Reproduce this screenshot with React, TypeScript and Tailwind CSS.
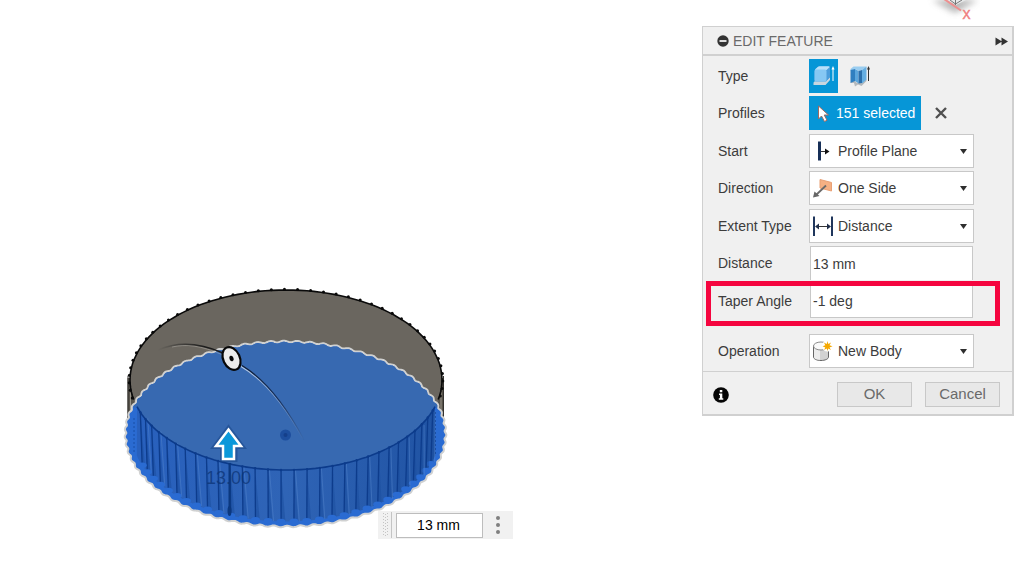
import type { ReactNode } from "react";

const TEETH = 75;
const STEP = (Math.PI * 2) / TEETH;
const PHASE = Math.PI / 2 + 0.032;

type Ring = { cx: number; cy: number; rx: number; ry: number };
const RIM: Ring = { cx: 286, cy: 380, rx: 156, ry: 90 };
const BASE: Ring = { cx: 285.5, cy: 434, rx: 159, ry: 91.5 };
const FOOT: Ring = { cx: 286, cy: 434, rx: 154, ry: 87.5 };

const at = (r: Ring, a: number) => ({
  x: r.cx + r.rx * Math.cos(a),
  y: r.cy + r.ry * Math.sin(a),
});

function arc(r: Ring, from: number, to: number) {
  const parts: string[] = [];
  for (let i = 0; i <= 80; i++) {
    const p = at(r, from + ((to - from) * i) / 80);
    parts.push(`${p.x.toFixed(1)},${p.y.toFixed(1)}`);
  }
  return parts.join("L");
}

function wavy(r: Ring, amp: number) {
  const parts: string[] = [];
  for (let i = 0; i < 900; i++) {
    const a = (i / 900) * Math.PI * 2;
    const d = amp * Math.cos((a - PHASE) * TEETH);
    const p = at({ ...r, rx: r.rx + d, ry: r.ry + d }, a);
    parts.push(`${p.x.toFixed(1)},${p.y.toFixed(1)}`);
  }
  return `M${parts.join("L")}Z`;
}

const angles = Array.from({ length: TEETH }, (_, i) => PHASE + (i - 37) * STEP);
const backAngles = angles.filter((a) => Math.sin(a) < 0.2);
const frontAngles = angles.filter((a) => Math.sin(a) > 0.3);
const basePath = wavy(BASE, 0.8);
const backRim = `M${arc(RIM, Math.PI - 0.22, Math.PI * 2 + 0.22)}`;
const frontRim = `M${arc(RIM, 0.3, Math.PI - 0.3)}`;
const wallPath = `${frontRim}L${arc(FOOT, Math.PI - 0.25, 0.25)}Z`;

function Model() {
  return (
    <svg
      className="absolute left-[120px] top-[280px]"
      width="332"
      height="254"
      viewBox="120 280 332 254"
      role="img"
      aria-label="Bottle cap extrusion"
    >
      <defs>
        <linearGradient id="fade" x1="158" y1="0" x2="205" y2="0" gradientUnits="userSpaceOnUse">
          <stop offset="0" stopColor="#1c1c1c" stopOpacity="0" />
          <stop offset="1" stopColor="#1c1c1c" />
        </linearGradient>
        <linearGradient id="fadeDown" x1="240" y1="365" x2="304" y2="442" gradientUnits="userSpaceOnUse">
          <stop offset="0" stopColor="#101c30" />
          <stop offset="0.5" stopColor="#17305c" />
          <stop offset="1" stopColor="#17305c" stopOpacity="0" />
        </linearGradient>
        <linearGradient id="fadeLight" x1="240" y1="365" x2="304" y2="442" gradientUnits="userSpaceOnUse">
          <stop offset="0" stopColor="#bccde6" />
          <stop offset="1" stopColor="#bccde6" stopOpacity="0" />
        </linearGradient>
        <linearGradient id="wall" x1="137" y1="0" x2="436" y2="0" gradientUnits="userSpaceOnUse">
          <stop offset="0" stopColor="#2860bd" />
          <stop offset="0.5" stopColor="#2f64b6" />
          <stop offset="1" stopColor="#2053a3" />
        </linearGradient>
        <clipPath id="baseClip">
          <path d={basePath} />
        </clipPath>
      </defs>

      <path d="M127.5 378V420H444V378Z" fill="#57534b" />
      <path d="M128 376V418M443.5 376V418" stroke="#33312e" strokeWidth="1" />
      <path d="M130.5 392V414M441 392V414" stroke="#9a958a" strokeWidth="1" />
      <path d={`${backRim}V434H133Z`} fill="#6a665f" />
      <path d={backRim} fill="none" stroke="#0a0a0a" strokeWidth="1.6" />
      {backAngles.map((a) => {
        const p = at({ ...RIM, rx: 156.8, ry: 90.7 }, a);
        return <circle key={a} cx={p.x} cy={p.y} r="1.5" fill="#0a0a0a" />;
      })}

      <path d={basePath} fill="#2a6bd2" stroke="#d0d1d1" strokeWidth="4" strokeLinejoin="round" />
      <path d={basePath} fill="#2a6bd2" />
      <g clipPath="url(#baseClip)">
        <path d={`M134 280H438V408L${arc(RIM, 0.3, Math.PI - 0.3)}L134 408Z`} fill="#3769b1" />
      </g>
      <path d={wallPath} fill="url(#wall)" />
      {frontAngles.map((a, i) => {
        const t = at(RIM, a);
        const b = at(FOOT, a);
        const t2 = at(RIM, a + STEP * 0.12);
        const b2 = at(FOOT, a - STEP * 0.18);
        return (
          <g key={a}>
            <path d={`M${t.x} ${t.y}L${b.x} ${b.y}L${b2.x + 2} ${b2.y}Z`} fill="#1c4f9f" opacity="0.55" />
            {i % 2 === 0 && (
              <line x1={t2.x + 3} y1={t2.y} x2={b2.x + 3} y2={b2.y} stroke="#5485cc" strokeWidth="0.8" opacity="0.6" />
            )}
            <line x1={t.x} y1={t.y} x2={b.x} y2={b.y} stroke="#0d3c8c" strokeWidth="1.3" />
            <ellipse cx={b.x} cy={b.y} rx="4.5" ry="2.8" fill="#2a6bd2" />
            <circle cx={t.x} cy={t.y} r="1.2" fill="#0b3a8c" />
          </g>
        );
      })}
      <path d={frontRim} fill="none" stroke="#0c3b8b" strokeWidth="1.6" />
      <path d="M134 418V452M435.500 412V456" stroke="#0d3c8c" strokeWidth="1" strokeDasharray="2 2" opacity="0.6" />
      <path d="M229.500 463V514" stroke="#0b387f" strokeWidth="2" />
      <ellipse cx="229.5" cy="511" rx="2" ry="5" fill="#0b387f" />

      <text
        x="206"
        y="484"
        fontSize="18"
        fill="#0c3475"
        fillOpacity="0.75"
        className="font-['Liberation_Sans',Arial,sans-serif]"
      >
        13.00
      </text>

      <circle cx="285.5" cy="435" r="5.5" fill="#1d4e9e" />
      <circle cx="285.5" cy="435" r="2" fill="#153f8a" />

      <path d="M172 347C186 344 200 345 223 355" fill="none" stroke="#d0cec8" strokeWidth="1" opacity="0.35" />
      <path d="M158 350C176 342 198 342 223 353" fill="none" stroke="url(#fade)" strokeWidth="1.6" />
      <path d="M241 366.500C264 380 284 404 303 439" fill="none" stroke="url(#fadeLight)" strokeWidth="1.2" />
      <path d="M242 365.500C266 380 285 404 304 440" fill="none" stroke="url(#fadeDown)" strokeWidth="1.3" />
      <ellipse
        cx="231.5"
        cy="358.5"
        rx="8.3"
        ry="12"
        transform="rotate(-25 231.5 358.5)"
        fill="#ececec"
        stroke="#080808"
        strokeWidth="2.2"
      />
      <ellipse cx="231.5" cy="358.5" rx="2" ry="2.800" transform="rotate(-20 231.5 358.5)" fill="#080808" />

      <path
        d="M228.5 428.500L242 446.500H235V459.500H222.500V446.500H215Z"
        fill="#0b98da"
        stroke="#174487"
        strokeWidth="5"
        opacity="0.5"
      />
      <path d="M228.5 429.500L241 446H234V459H223V446H216Z" fill="#0b98da" stroke="#ffffff" strokeWidth="2.5" />
    </svg>
  );
}

function ViewCube() {
  return (
    <svg className="absolute right-[39px] top-0" width="60" height="24" viewBox="920 0 60 24" aria-hidden="true">
      <defs>
        <filter id="soft" x="-50%" y="-100%" width="200%" height="300%">
          <feGaussianBlur stdDeviation="3" />
        </filter>
      </defs>
      <path d="M932 0L955 13L978 0Z" fill="#a5a5a5" opacity="0.8" filter="url(#soft)" />
      <path d="M947 0L956 5L966 0Z" fill="#e7e9ea" />
      <path d="M955.500 0V5M950 0L955.500 4L962 0" stroke="#777777" strokeWidth="1" fill="none" />
      <path d="M944 -1L961 10.500" stroke="#ee8f8f" strokeWidth="2" />
      <text
        x="962.5"
        y="19"
        fontSize="12"
        fill="#f08080"
        stroke="#f08080"
        strokeWidth="0.5"
        className="font-['Liberation_Sans',Arial,sans-serif]"
      >
        X
      </text>
    </svg>
  );
}

function ExtrudeIcon() {
  return (
    <svg width="24" height="26" viewBox="0 0 24 26" aria-hidden="true">
      <path d="M1.500 19.500L3 18H14L18 14V17L13.500 22H1.500Z" fill="#c9d6df" />
      <path d="M2.500 8.500Q2.500 7 3.500 6L6 3.800Q6.500 3.300 7.500 3.300H16.500Q18 3.300 18 4.800V14L14 18.500H4Q2.500 18.500 2.500 17Z" fill="#4b9ddb" />
      <path d="M3.500 6L6 3.800Q6.500 3.300 7.500 3.300H16.500Q17.500 3.300 17.800 4L14.500 7H3Z" fill="#b9e0fa" />
      <rect x="2.5" y="6.5" width="12" height="12" rx="1.5" fill="#86c8f3" />
      <path d="M21 18V5" stroke="#ffffff" strokeWidth="1" />
      <path d="M19.500 6.500L21 3L22.500 6.500Z" fill="#ffffff" />
    </svg>
  );
}

function ThinExtrudeIcon() {
  return (
    <svg width="24" height="26" viewBox="0 0 24 26" aria-hidden="true">
      <path d="M1.500 20L5 17L8 20L13 19L17.500 16V18L12.500 23L9 21.500L6 23.500L5 20Z" fill="#b4b9bd" />
      <path d="M1.500 6L4.500 3.500H17.500L13 7L9.500 8L6.500 6L1.500 7.500Z" fill="#9acdf0" />
      <path d="M1.500 7L6 6V18L1.500 20Z" fill="#2f7fc0" />
      <path d="M6 6L9.500 8V20.500L6 18Z" fill="#5aa6dd" />
      <path d="M9.500 8L13 7V20L9.500 20.500Z" fill="#2b70ad" />
      <path d="M13 7L17.500 3.500V16.500L13 20.500Z" fill="#64aee2" />
      <path d="M19.500 18V5" stroke="#333333" strokeWidth="1" />
      <path d="M18 6.500L19.500 3L21 6.500Z" fill="#333333" />
    </svg>
  );
}

function StartIcon() {
  return (
    <svg width="24" height="24" viewBox="0 0 24 24" aria-hidden="true">
      <path d="M8.500 2.500V21.500" stroke="#172f57" strokeWidth="3" />
      <path d="M10 12.500H16" stroke="#333333" />
      <path d="M14 9.500L18.500 12.500L14 15.500Z" fill="#111111" />
    </svg>
  );
}

function DirectionIcon() {
  return (
    <svg width="24" height="24" viewBox="0 0 24 24" aria-hidden="true">
      <path d="M9 3.500L20.500 6.500V15L9 12Z" fill="#f5b083" stroke="#e8a075" strokeWidth="1" />
      <path d="M15 9.500L5 19" stroke="#6a6a6a" strokeWidth="1.8" />
      <path d="M2 21.500L3.500 15.500L8.500 20Z" fill="#666666" />
    </svg>
  );
}

function DistanceIcon() {
  return (
    <svg width="24" height="24" viewBox="0 0 24 24" aria-hidden="true">
      <path d="M3 2.500V22M21 2.500V22" stroke="#1f365c" strokeWidth="2" />
      <path d="M6 12.500H18" stroke="#333333" />
      <path d="M4 12.500L8 9.500V15.500ZM20 12.500L16 9.500V15.500Z" fill="#22304a" />
    </svg>
  );
}

function NewBodyIcon() {
  return (
    <svg width="24" height="24" viewBox="0 0 24 24" aria-hidden="true">
      <path d="M2.500 7V18C2.500 20 6 21.500 10 21.500S17.500 20 17.500 18V7Z" fill="#d2d2d2" stroke="#666666" />
      <path d="M3 7H9V20.800Q3 20.500 3 18Z" fill="#ececec" />
      <ellipse cx="10" cy="7" rx="7.5" ry="4" fill="#fafafa" stroke="#8a8a8a" />
      <circle cx="16.5" cy="7" r="5.5" fill="#ffffff" />
      <path
        d="M16.500 2L17.300 5L20 3.500L18.500 6.200L21.500 7.200L18.500 8.400L20 11L17.300 9.600L16.500 12L15.700 9.600L13 11L14.300 8.400L11.500 7.200L14.300 6.200L13 3.500L15.700 5Z"
        fill="#f5a800"
      />
    </svg>
  );
}

function Row({ label, htmlFor, children }: { label: string; htmlFor?: string; children: ReactNode }) {
  return (
    <div className="flex h-[34px] items-center odd:mb-[3px] even:mb-1">
      {htmlFor ? (
        <label htmlFor={htmlFor} className="w-[91px] shrink-0">
          {label}
        </label>
      ) : (
        <span className="w-[91px] shrink-0">{label}</span>
      )}
      {children}
    </div>
  );
}

function Picker({ id, value, icon }: { id: string; value: string; icon: ReactNode }) {
  return (
    <div className="relative w-[165px]">
      <span className="pointer-events-none absolute inset-y-0 left-[2px] flex items-center">{icon}</span>
      <select
        id={id}
        defaultValue={value}
        className="h-[34px] w-full appearance-none border border-[#c8c8c8] bg-white pr-5 pl-[28px] text-[14px] text-[#3c3c3c]"
      >
        <option>{value}</option>
      </select>
      <span className="pointer-events-none absolute inset-y-0 right-[7px] flex items-center">
        <svg width="7" height="5" viewBox="0 0 7 5" aria-hidden="true">
          <path d="M0 0H7L3.500 5Z" fill="#2e2e2e" />
        </svg>
      </span>
    </div>
  );
}

function EditPanel() {
  return (
    <section className="w-[312px] border border-r-2 border-b-2 border-[#d0d0d0] bg-[#f0f0f0] text-[14px] text-[#3c3c3c]">
      <header className="flex h-[29px] items-center border-b-2 border-[#d0d0d0] pt-px pr-1 pl-[14px]">
        <button type="button" aria-label="Collapse" className="mr-1">
          <svg width="12" height="12" viewBox="0 0 12 12" aria-hidden="true">
            <circle cx="6" cy="6" r="5.700" fill="#333333" />
            <path d="M2.500 6H9.500" stroke="#f0f0f0" strokeWidth="1.800" />
          </svg>
        </button>
        <h2 className="flex-1 text-[#6a6a6a]">EDIT FEATURE</h2>
        <button type="button" aria-label="Dock">
          <svg width="13" height="9" viewBox="0 0 13 9" aria-hidden="true">
            <path d="M0.500 0.500L7 4.500L0.500 8.500ZM6.500 0.500L13 4.500L6.500 8.500Z" fill="#333333" />
          </svg>
        </button>
      </header>

      <div className="px-[15px] pt-[3px]">
        <Row label="Type">
          <button
            type="button"
            aria-label="Extrude"
            className="flex h-[34px] w-[29px] items-center justify-center bg-[#0696d7]"
          >
            <ExtrudeIcon />
          </button>
          <button
            type="button"
            aria-label="Thin extrude"
            className="ml-2 flex h-[34px] w-[29px] items-center justify-center"
          >
            <ThinExtrudeIcon />
          </button>
        </Row>
        <Row label="Profiles">
          <button type="button" className="flex h-[34px] w-[112px] items-center bg-[#0696d7] pl-[8px] text-white">
            <svg className="mr-[5px]" width="14" height="20" viewBox="0 0 14 20" aria-hidden="true">
              <path
                d="M1.500 3V16L4.500 13L7.500 18.500L10 17.200L7.200 12H11.500Z"
                fill="#ffffff"
                stroke="#a06a60"
                strokeWidth="1"
              />
            </svg>
            151 selected
          </button>
          <button type="button" aria-label="Clear selection" className="ml-[14px]">
            <svg width="12" height="12" viewBox="0 0 12 12" aria-hidden="true">
              <path d="M1 1L11 11M11 1L1 11" stroke="#505050" strokeWidth="2.4" />
            </svg>
          </button>
        </Row>
        <Row label="Start" htmlFor="start">
          <Picker id="start" value="Profile Plane" icon={<StartIcon />} />
        </Row>
        <Row label="Direction" htmlFor="direction">
          <Picker id="direction" value="One Side" icon={<DirectionIcon />} />
        </Row>
        <Row label="Extent Type" htmlFor="extent">
          <Picker id="extent" value="Distance" icon={<DistanceIcon />} />
        </Row>
        <Row label="Distance" htmlFor="distance">
          <input
            id="distance"
            defaultValue="13 mm"
            className="ml-px h-[34px] w-[163px] border border-b-0 border-[#c8c8c8] bg-white px-[2px]"
          />
        </Row>
        <div className="relative">
          <div className="flex h-[34px] items-center">
            <label htmlFor="taper" className="w-[91px] shrink-0">
              Taper Angle
            </label>
            <input
              id="taper"
              defaultValue="-1 deg"
              className="ml-px h-[34px] w-[163px] border border-t-0 border-[#c8c8c8] bg-white px-[2px]"
            />
          </div>
          <div className="pointer-events-none absolute -top-[3px] -right-[3px] -bottom-2 -left-[12px] border-[5px] border-[#f5053f]" />
        </div>
        <div className="flex items-center pt-4 pb-[3px]">
          <label htmlFor="operation" className="w-[91px] shrink-0">
            Operation
          </label>
          <Picker id="operation" value="New Body" icon={<NewBodyIcon />} />
        </div>
      </div>

      <footer className="flex items-center border-t border-[#d0d0d0] pt-[10px] pr-3 pb-[7px] pl-[10px] text-[15px] text-[#6a6a6a]">
        <button type="button" aria-label="Information" className="mr-auto">
          <svg width="16" height="16" viewBox="0 0 16 16" aria-hidden="true">
            <circle cx="8" cy="8" r="7.800" fill="#050505" />
            <path
              d="M6.800 3H9.300V5.300H6.800ZM6 6.500H9.300V11.300H10.300V12.800H5.800V11.300H6.900V8H6Z"
              fill="#ffffff"
            />
          </svg>
        </button>
        <button type="button" className="h-[25px] w-[75px] border border-[#c8c8c8] bg-[#e8e8e8]">
          OK
        </button>
        <button type="button" className="ml-[13px] h-[25px] w-[75px] border border-[#c8c8c8] bg-[#e8e8e8]">
          Cancel
        </button>
      </footer>
    </section>
  );
}

function ValueBox() {
  return (
    <div className="absolute top-[511px] left-[378px] flex h-[28px] w-[135px] items-center bg-[#f1f1f1]">
      <svg width="18" height="28" viewBox="0 0 18 28" aria-hidden="true">
        <path d="M5.500 2V26M9.500 2V26" stroke="#c4c4c4" strokeWidth="1" strokeDasharray="1 2" />
        <path d="M7.500 3V26" stroke="#c4c4c4" strokeWidth="1" strokeDasharray="1 2" />
        <path d="M13.500 1V27" stroke="#c4c4c4" strokeWidth="1" />
      </svg>
      <input
        aria-label="Distance value"
        defaultValue="13 mm"
        className="h-[25px] w-[87px] border border-[#bdbdbd] bg-white pr-[6px] pl-1 text-center text-[14px] text-black"
      />
      <button type="button" aria-label="More options" className="flex flex-1 justify-center">
        <svg width="4" height="18" viewBox="0 0 4 18" aria-hidden="true">
          <circle cx="2" cy="2" r="2" fill="#808080" />
          <circle cx="2" cy="9" r="2" fill="#808080" />
          <circle cx="2" cy="16" r="2" fill="#808080" />
        </svg>
      </button>
    </div>
  );
}

export default function App() {
  return (
    <main className="relative flex min-h-screen items-start justify-end overflow-hidden bg-white pt-[26px] pr-[5px] font-['Liberation_Sans',Arial,sans-serif]">
      <ViewCube />
      <Model />
      <ValueBox />
      <EditPanel />
    </main>
  );
}
